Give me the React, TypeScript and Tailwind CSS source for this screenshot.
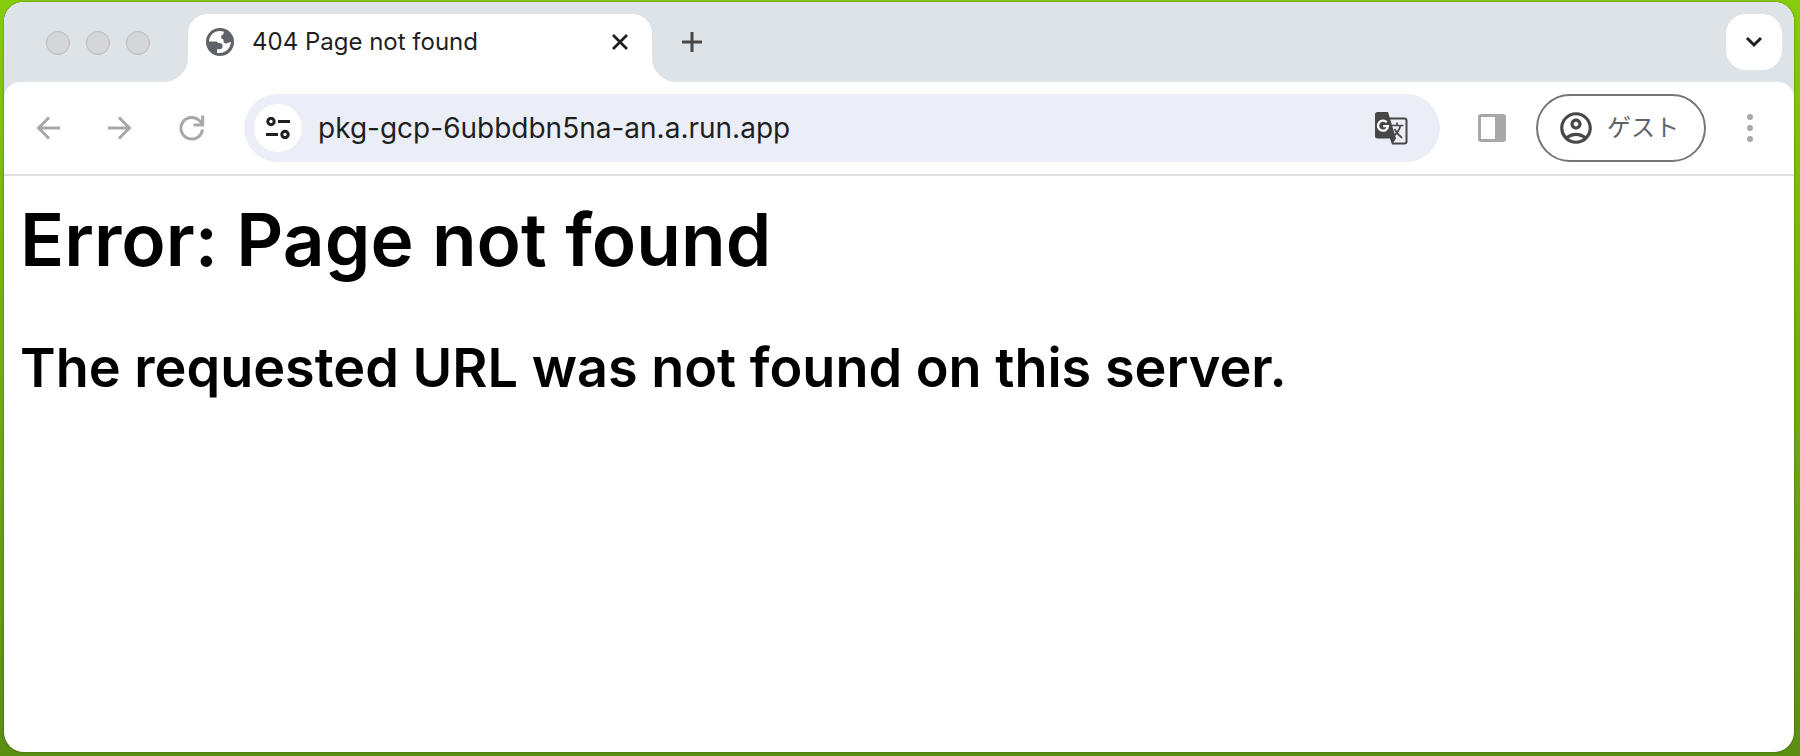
import { MdOutlineAccountCircle } from "react-icons/md";

function GlobeIcon() {
  return (
    <svg viewBox="0 0 28 28" className="size-7 shrink-0" aria-hidden="true">
      <circle cx="14" cy="14" r="14" fill="#5f6368" />
      <path
        fill="#fff"
        d="M3 13.6C3.1 7.8 7.9 3 14 3c1.3 0 2.600.2 3.700.6v1.200c0 1.300-1 2.400-2.400 2.400v2.400c0 1.200.8 1.700 1.800 1.700h.4v1.800c0 1.500 1.100 2.500 2.600 2.500 1.200 0 1.600-1 2.700-1.100.9-.1 1.500-.3 2.100-.7-.1 6.400-5.100 11.200-11.200 11.200-1 0-1.900-.1-2.700-.3v-3.500h2.800c1.600 0 2.800-1.200 2.800-2.800v-.6c0-1.700-1.300-2.900-3-2.900h-1.600c-.5-.9-1.200-1.300-2.200-1.300z"
      />
    </svg>
  );
}

function TranslateIcon() {
  return (
    <svg viewBox="0 0 33 33" className="size-[33px]" fill="none" aria-hidden="true">
      <path d="M13 6.500H29.500a2 2 0 0 1 2 2V29.500a2 2 0 0 1-2 2H17" stroke="#474747" strokeWidth="2" />
      <path d="M2.500 0H13L21 26.500 17 32.500 15 26.500H2.500A2.500 2.500 0 0 1 0 24V2.500A2.500 2.500 0 0 1 2.500 0z" fill="#474747" />
      <path d="M22 10.500V13.500M16 13.500H28.500M25.500 13.500C24.500 18 22 21.500 18 24.500M19.500 17C21.500 21 24 23.500 27 26" stroke="#474747" strokeWidth="1.700" />
      <path d="M11.700 10.300A5 5 0 1 0 13 14.200H8.200" stroke="#fff" strokeWidth="2.300" />
    </svg>
  );
}

function TabStrip() {
  return (
    <div className="flex h-20 bg-white">
      <div className="flex w-[184px] shrink-0 items-center gap-4 rounded-br-[24px] bg-[#dee3e7] pt-[2px] pl-[42px]">
        {["Close window", "Minimize window", "Zoom window"].map((label) => (
          <button
            key={label}
            aria-label={label}
            className="size-6 rounded-full border border-[#b9bbbe] bg-[#d4d6da]"
          />
        ))}
      </div>
      <div className="w-[464px] shrink-0 bg-[#dee3e7] pt-3">
        <div className="flex h-[68px] items-start rounded-t-[20px] bg-white px-[18px] pt-[14px]">
          <GlobeIcon />
          <span className="ml-[18px] flex-1 text-[24px] leading-7 text-[#1f1f1f]">404 Page not found</span>
          <button aria-label="Close tab" className="flex size-7 items-center justify-center">
            <svg viewBox="0 0 16 16" className="size-4" stroke="#1f1f1f" strokeWidth="2.8" aria-hidden="true">
              <path d="M1 1l14 14M15 1L1 15" />
            </svg>
          </button>
        </div>
      </div>
      <div className="flex flex-1 items-start justify-between rounded-bl-[24px] bg-[#dee3e7] pt-3 pr-3 pl-3">
        <button aria-label="New tab" className="flex size-14 items-center justify-center">
          <svg viewBox="0 0 20 20" className="size-5" stroke="#474747" strokeWidth="3" aria-hidden="true">
            <path d="M10 0v20M0 10h20" />
          </svg>
        </button>
        <button
          aria-label="Search tabs"
          className="flex size-14 items-center justify-center rounded-[20px] bg-white"
        >
          <svg viewBox="0 0 18 12" className="h-3 w-[18px]" fill="none" stroke="#1f1f1f" strokeWidth="3" aria-hidden="true">
            <path d="M2 2l7 7 7-7" />
          </svg>
        </button>
      </div>
    </div>
  );
}

function Toolbar() {
  return (
    <div className="bg-[#dee3e7]">
      <div className="flex h-[94px] items-center rounded-t-[16px] border-b-2 border-[#dfe0e1] bg-white pl-4">
        <nav className="flex shrink-0 gap-4 text-[#a8a8a8]" aria-label="History">
          <button aria-label="Back" className="flex size-14 items-center justify-center">
            <svg viewBox="0 0 24 24" className="size-6" fill="none" stroke="currentColor" strokeWidth="3" aria-hidden="true">
              <path d="M13 1.500L2.500 12 13 22.500M2 12h22" />
            </svg>
          </button>
          <button aria-label="Forward" className="flex size-14 items-center justify-center">
            <svg viewBox="0 0 24 24" className="size-6" fill="none" stroke="currentColor" strokeWidth="3" aria-hidden="true">
              <path d="M11 1.500L21.500 12 11 22.500M22 12H0" />
            </svg>
          </button>
          <button aria-label="Reload" className="flex size-14 items-center justify-center">
            <svg viewBox="0 0 26 26" className="size-[26px]" fill="none" stroke="currentColor" strokeWidth="3" aria-hidden="true">
              <path d="M23.500 14.500A10.800 10.800 0 1 1 20.500 5.700l3 3M23.700 0.500v9.500H14.500" />
            </svg>
          </button>
        </nav>
        <div className="ml-6 flex h-[68px] min-w-0 flex-1 items-center rounded-full bg-[#ebeef6] pr-8 pl-[10px]">
          <button
            aria-label="View site information"
            className="flex size-12 shrink-0 items-center justify-center rounded-full bg-white"
          >
            <svg viewBox="0 0 24 22" className="h-[22px] w-6" fill="none" stroke="#1f1f1f" strokeWidth="3" aria-hidden="true">
              <circle cx="5" cy="4.500" r="3.200" />
              <path d="M12 4.500h12M0 17.500h12" />
              <circle cx="19" cy="17.500" r="3.200" />
            </svg>
          </button>
          <input
            aria-label="Address"
            defaultValue="pkg-gcp-6ubbdbn5na-an.a.run.app"
            className="ml-4 min-w-0 flex-1 bg-transparent text-[28px] leading-9 text-[#1f1f1f] outline-none"
          />
          <button aria-label="Translate this page" className="shrink-0">
            <TranslateIcon />
          </button>
        </div>
        <button aria-label="Side panel" className="ml-[38px] shrink-0">
          <svg viewBox="0 0 28 28" className="size-7" aria-hidden="true">
            <rect width="28" height="28" rx="3" fill="#a8a8a8" />
            <rect x="3" y="3" width="14" height="22" fill="#fff" />
          </svg>
        </button>
        <button className="ml-[30px] flex h-[68px] w-[170px] shrink-0 items-center rounded-full border-2 border-[#747775] pl-[19px]">
          <MdOutlineAccountCircle className="size-[38px] text-[#474747]" />
          <span className="ml-3 text-[24px] leading-9 text-[#5f6368]">ゲスト</span>
        </button>
        <button aria-label="More" className="mx-[30px] flex w-7 shrink-0 justify-center">
          <svg viewBox="0 0 6 28" className="h-7 w-[6px]" fill="#a8a8a8" aria-hidden="true">
            <circle cx="3" cy="3" r="3" />
            <circle cx="3" cy="14" r="3" />
            <circle cx="3" cy="25" r="3" />
          </svg>
        </button>
      </div>
    </div>
  );
}

export default function App() {
  return (
    <div className="flex min-h-screen flex-col bg-linear-to-b from-[#86cc0c] to-[#5a8f12] pt-[2px] pr-[6px] pb-1 pl-1 font-['Inter','Noto_Sans_CJK_JP',sans-serif]">
      <div className="flex flex-1 flex-col overflow-hidden rounded-[20px] bg-white shadow-[0_0_2px_rgba(0,0,0,0.5)]">
        <TabStrip />
        <Toolbar />
        <main className="px-4 pt-[22px] text-black">
          <h1 className="text-[73px] leading-[84px] font-semibold">Error: Page not found</h1>
          <h2 className="mt-[54px] text-[54px] leading-[64px] font-semibold">
            The requested URL was not found on this server.
          </h2>
        </main>
      </div>
    </div>
  );
}
